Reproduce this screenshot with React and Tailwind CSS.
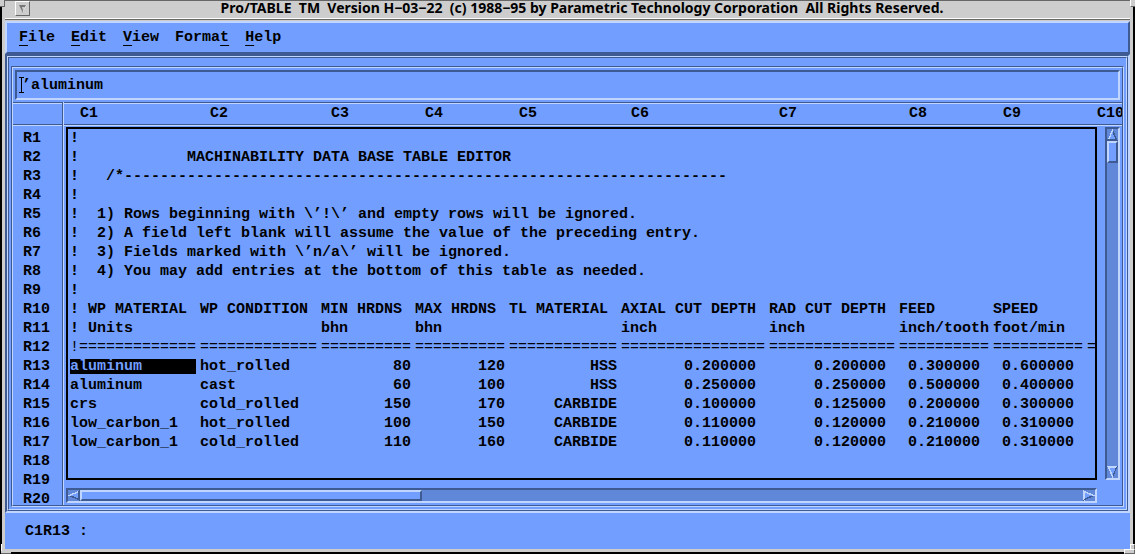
import React from "react";

const COLUMNS = [
  { id: "C1", width: "w-[130px]" },
  { id: "C2", width: "w-[121px]" },
  { id: "C3", width: "w-[94px]" },
  { id: "C4", width: "w-[94px]" },
  { id: "C5", width: "w-[112px]" },
  { id: "C6", width: "w-[148px]" },
  { id: "C7", width: "w-[130px]" },
  { id: "C8", width: "w-[94px]" },
  { id: "C9", width: "w-[94px]" },
  { id: "C10", width: "w-[94px]" },
];

const MENUS = [
  ["", "F", "ile"],
  ["", "E", "dit"],
  ["", "V", "iew"],
  ["Forma", "t", ""],
  ["", "H", "elp"],
];

const NOTES = [
  "!",
  "!            MACHINABILITY DATA BASE TABLE EDITOR",
  "!   /*" + "-".repeat(67),
  "!",
  "!  1) Rows beginning with \\’!\\’ and empty rows will be ignored.",
  "!  2) A field left blank will assume the value of the preceding entry.",
  "!  3) Fields marked with \\’n/a\\’ will be ignored.",
  "!  4) You may add entries at the bottom of this table as needed.",
  "!",
];

const HEADINGS = [
  ["! WP MATERIAL", "WP CONDITION", "MIN HRDNS", "MAX HRDNS", "TL MATERIAL", "AXIAL CUT DEPTH", "RAD CUT DEPTH", "FEED", "SPEED", ""],
  ["! Units", "", "bhn", "bhn", "", "inch", "inch", "inch/tooth", "foot/min", ""],
];

const RULES = ["!" + "=".repeat(13), ...[13, 10, 10, 12, 16, 14, 10, 10, 10].map((n) => "=".repeat(n))];

const ENTRIES = [
  ["aluminum", "hot_rolled", "80", "120", "HSS", "0.200000", "0.200000", "0.300000", "0.600000", ""],
  ["aluminum", "cast", "60", "100", "HSS", "0.250000", "0.250000", "0.500000", "0.400000", ""],
  ["crs", "cold_rolled", "150", "170", "CARBIDE", "0.100000", "0.125000", "0.200000", "0.300000", ""],
  ["low_carbon_1", "hot_rolled", "100", "150", "CARBIDE", "0.110000", "0.120000", "0.210000", "0.310000", ""],
  ["low_carbon_1", "cold_rolled", "110", "160", "CARBIDE", "0.110000", "0.120000", "0.210000", "0.310000", ""],
];

const SUNKEN = "border-2 border-t-[#3d5a92] border-l-[#3d5a92] border-b-[#c0d6ff] border-r-[#c0d6ff]";
const RAISED = "border-2 border-t-[#c0d6ff] border-l-[#c0d6ff] border-b-[#3d5a92] border-r-[#3d5a92]";
const LINE_SUNKEN = "border border-t-[#3d5a92] border-l-[#3d5a92] border-b-[#c0d6ff] border-r-[#c0d6ff]";
const LINE_RAISED = "border border-t-[#c0d6ff] border-l-[#c0d6ff] border-b-[#3d5a92] border-r-[#3d5a92]";

function cellClass(column) {
  if (column < 2) return "p-0 pr-1";
  return column < 5 ? "p-0 pr-1 text-right" : "p-0 pr-[13px] text-right";
}

function Arrow({ direction }) {
  const shapes = {
    up: [["M6 0 L0 12 H2 L6 3Z", "#c0d6ff"], ["M6 0 L12 12 H0 V10 H9 L6 3Z", "#3d5a92"]],
    down: [["M0 0 H12 L11 2 H3 L6 9 L6 12Z", "#c0d6ff"], ["M12 0 L6 12 L6 9 L10 1Z", "#3d5a92"]],
    left: [["M0 6 L12 0 V2 L3 6Z", "#c0d6ff"], ["M0 6 L12 12 V0 L10 2 V9 L3 6Z", "#3d5a92"]],
    right: [["M0 0 L12 6 H9 L2 3 V12 H0Z", "#c0d6ff"], ["M0 12 L12 6 H9 L2 9Z", "#3d5a92"]],
  };
  const faces = { up: "M6 0 L12 12 H0Z", down: "M0 0 H12 L6 12Z", left: "M12 0 V12 L0 6Z", right: "M0 0 L12 6 L0 12Z" };
  return (
    <svg viewBox="0 0 12 12" className="block h-full w-full" shapeRendering="crispEdges" preserveAspectRatio="none">
      <path d={faces[direction]} fill="#729fff" />
      {shapes[direction].map(([d, fill]) => (
        <path key={fill} d={d} fill={fill} />
      ))}
    </svg>
  );
}

function TitleBar() {
  return (
    <header className="bg-[#cdcdcd] border-t border-[#666666]">
      <div className="flex h-[17px] items-start pl-2.5">
        <button
          aria-label="Window menu"
          className="flex h-[15px] w-[15px] shrink-0 items-center justify-center border border-t-white border-l-white border-b-[#666666] border-r-[#666666]"
        >
          <svg viewBox="0 0 8 8" className="h-2 w-2">
            <path d="M0 0H8L4 8Z" fill="#777777" />
            <path d="M3 2H6L4 6Z" fill="#cdcdcd" />
            <path d="M8 0L4 8L4 6L7 0Z" fill="#f4f4f4" />
          </svg>
        </button>
        <h1 className="flex-1 whitespace-pre pl-1 text-center font-['Noto_Sans',sans-serif] text-[14px] font-bold leading-[14px]">
          {"Pro/TABLE  TM  Version H−03−22  (c) 1988−95 by Parametric Technology Corporation  All Rights Reserved."}
        </h1>
      </div>
      <div className="h-[3px] border-t border-b border-t-white border-b-[#cdcdcd] bg-[#666666]" />
    </header>
  );
}

function MenuBar() {
  return (
    <nav className={`${RAISED} flex h-[33px] items-center gap-4 pl-3`}>
      {MENUS.map(([before, key, after]) => (
        <button key={before + key + after} className="leading-[19px]">
          {before}
          <span className="underline decoration-1 underline-offset-[4px]">{key}</span>
          {after}
        </button>
      ))}
    </nav>
  );
}

function EntryField() {
  return (
    <div className="p-0.5">
      <div className={`${SUNKEN} relative h-[30px]`}>
        <input
          aria-label="Cell value"
          defaultValue="’aluminum"
          className="block h-full w-full bg-transparent pl-[5px] pt-px outline-none"
        />
        <svg viewBox="0 0 5 16" className="pointer-events-none absolute left-0.5 top-[5px] h-4 w-[5px]" shapeRendering="crispEdges">
          <path d="M0 0H5V1H3V15H5V16H0V15H2V1H0Z" fill="#000" />
        </svg>
      </div>
    </div>
  );
}

function VerticalScrollbar() {
  return (
    <div className={`${SUNKEN} flex w-[15px] flex-col bg-[#6087d8]`}>
      <button aria-label="Scroll up" className="h-3 w-[11px]">
        <Arrow direction="up" />
      </button>
      <div className={`${RAISED} h-[22px] bg-[#729fff]`} />
      <div className="flex-1" />
      <button aria-label="Scroll down" className="h-3 w-[11px]">
        <Arrow direction="down" />
      </button>
    </div>
  );
}

function HorizontalScrollbar() {
  return (
    <div className={`${SUNKEN} flex h-[15px] bg-[#6087d8]`}>
      <button aria-label="Scroll left" className="h-[11px] w-3">
        <Arrow direction="left" />
      </button>
      <div className={`${RAISED} w-1/3 bg-[#729fff]`} />
      <div className="flex-1" />
      <button aria-label="Scroll right" className="h-[11px] w-3">
        <Arrow direction="right" />
      </button>
    </div>
  );
}

function DataTable() {
  return (
    <table className="w-[1111px] table-fixed border-collapse">
      <colgroup>
        {COLUMNS.map((c) => (
          <col key={c.id} className={c.width} />
        ))}
      </colgroup>
      <tbody>
        {NOTES.map((note, i) => (
          <tr key={i} className="h-[19px]">
            <td colSpan={COLUMNS.length} className="p-0">{note}</td>
          </tr>
        ))}
        {HEADINGS.map((row, i) => (
          <tr key={i} className="h-[19px]">
            {row.map((cell, j) => (
              <td key={j} className="p-0">{cell}</td>
            ))}
          </tr>
        ))}
        <tr className="h-[19px] font-normal">
          {RULES.map((rule, j) => (
            <td key={j} className="p-0">{rule}</td>
          ))}
        </tr>
        {ENTRIES.map((row, i) => (
          <tr key={i} className="h-[19px]">
            {row.map((cell, j) => (
              <td key={j} className={cellClass(j)}>
                {i === 0 && j === 0 ? (
                  <div className="bg-black leading-[15px] text-[#729fff]">{cell}</div>
                ) : (
                  cell
                )}
              </td>
            ))}
          </tr>
        ))}
      </tbody>
    </table>
  );
}

function Sheet() {
  return (
    <div className="flex min-h-0 flex-1">
      <div className="flex w-[49px] shrink-0 flex-col">
        <div className="h-[23px] shrink-0 border-y border-[#3d5a92] shadow-[inset_0_1px_0_#c0d6ff,0_1px_0_#c0d6ff]" />
        <ol className="min-h-0 flex-1 overflow-hidden pl-2.5 pt-1">
          {Array.from({ length: 20 }, (_, i) => (
            <li key={i} className="h-[19px]">R{i + 1}</li>
          ))}
        </ol>
      </div>
      <div className="w-0.5 shrink-0 border-l border-[#3d5a92] bg-[#c0d6ff]" />
      <div className="flex min-w-0 flex-1 flex-col">
        <div className="flex h-[23px] shrink-0 overflow-hidden border-y border-[#3d5a92] pl-4 shadow-[inset_0_1px_0_#c0d6ff,0_1px_0_#c0d6ff]">
          {COLUMNS.map((c) => (
            <div key={c.id} className={`${c.width} shrink-0 leading-[21px]`}>{c.id}</div>
          ))}
        </div>
        <div className="flex min-h-0 flex-1 flex-col gap-2 p-0.5">
          <div className="flex min-h-0 flex-1 gap-2">
            <main className="min-w-0 flex-1 overflow-hidden whitespace-pre border-2 border-black pl-0.5">
              <DataTable />
            </main>
            <VerticalScrollbar />
          </div>
          <div className="pr-[23px]">
            <HorizontalScrollbar />
          </div>
        </div>
      </div>
    </div>
  );
}

export default function App() {
  return (
    <div className="relative flex h-screen min-h-80 flex-col overflow-hidden bg-black px-0.5 pb-0.5 font-['Liberation_Mono',monospace] text-[15px] font-bold leading-[19px] text-black">
      <div className="flex min-h-0 flex-1 flex-col border-x-[3px] border-b-[3px] border-[#cdcdcd]">
        <TitleBar />
        <div className="flex min-h-0 flex-1 flex-col bg-[#729fff]">
          <MenuBar />
          <div className={`${SUNKEN} flex min-h-0 flex-1`}>
            <div className={`${LINE_RAISED} flex min-w-0 flex-1`}>
              <div className={`${LINE_SUNKEN} flex min-w-0 flex-1 px-0.5 pb-0.5 pt-2`}>
                <div className={`${LINE_SUNKEN} flex min-w-0 flex-1`}>
                  <div className={`${LINE_RAISED} flex min-w-0 flex-1 flex-col`}>
                    <EntryField />
                    <Sheet />
                  </div>
                </div>
              </div>
            </div>
          </div>
          <footer className="flex h-9 shrink-0 items-center whitespace-pre pl-5">C1R13 :</footer>
        </div>
      </div>
      <div className="absolute -left-0.5 top-0 h-[7px] w-[7px] border-b border-r border-[#666666] bg-[#cdcdcd]" />
      <div className="absolute -right-0.5 top-0 h-[7px] w-[7px] border-b border-l border-b-[#666666] border-l-white bg-[#cdcdcd]" />
      <div className="absolute bottom-0 left-px h-2.5 w-[3px] border-l border-white bg-[#cdcdcd]" />
      <div className="absolute bottom-0 left-px h-[3px] w-2.5 border-b border-[#666666] bg-[#cdcdcd]" />
      <div className="absolute bottom-0 right-0 h-2.5 w-[5px] border border-b-[#666666] border-l-white border-r-[#666666] border-t-white bg-[#cdcdcd]" />
      <div className="absolute bottom-0 right-0 h-[5px] w-[11px] border border-b-[#666666] border-l-white border-r-[#666666] border-t-white bg-[#cdcdcd]" />
    </div>
  );
}
